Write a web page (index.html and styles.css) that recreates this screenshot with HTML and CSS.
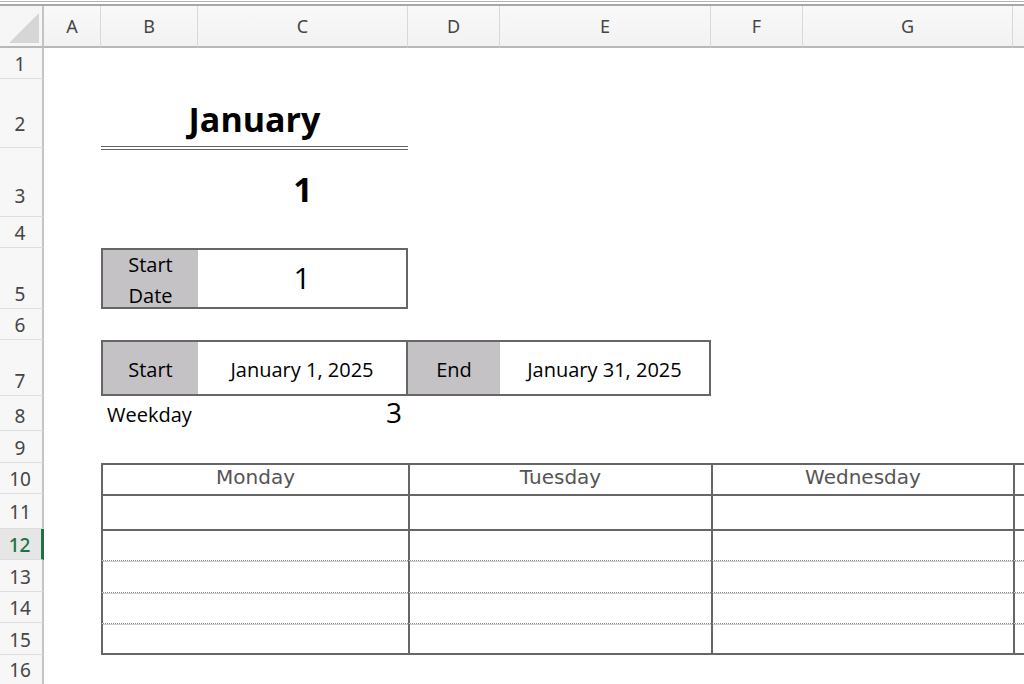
FILE: index.html
```html
<!DOCTYPE html>
<html lang="en">
<head>
<meta charset="utf-8">
<title>January</title>
<link rel="stylesheet" href="styles.css">
</head>
<body>
<div class="sheet">
  <div class="topbar"></div>

  <div class="corner"><span class="tri"></span></div>
  <div class="ch">A</div>
  <div class="ch">B</div>
  <div class="ch">C</div>
  <div class="ch">D</div>
  <div class="ch">E</div>
  <div class="ch">F</div>
  <div class="ch">G</div>
  <div class="ch last"></div>

  <div class="rh r1">1</div>
  <div class="rh r2">2</div>
  <div class="rh r3">3</div>
  <div class="rh r4">4</div>
  <div class="rh r5">5</div>
  <div class="rh r6">6</div>
  <div class="rh r7">7</div>
  <div class="rh r8">8</div>
  <div class="rh r9">9</div>
  <div class="rh r10">10</div>
  <div class="rh r11">11</div>
  <div class="rh r12 sel">12</div>
  <div class="rh r13">13</div>
  <div class="rh r14">14</div>
  <div class="rh r15">15</div>
  <div class="rh r16">16</div>

  <div class="title">January</div>
  <div class="monthnum">1</div>

  <div class="lbl sd-lbl">Start<br>Date</div>
  <div class="sd-val">1</div>

  <div class="lbl rng-start">Start</div>
  <div class="rng-sval">January 1, 2025</div>
  <div class="lbl rng-end">End</div>
  <div class="rng-eval">January 31, 2025</div>

  <div class="weekday">Weekday</div>
  <div class="weeknum">3</div>

  <div class="tc c1 row10 th">Monday</div>
  <div class="tc c2 row10 th">Tuesday</div>
  <div class="tc c3 row10 th">Wednesday</div>
  <div class="tc c4 row10 th"></div>

  <div class="tc c1 row11 solid"></div>
  <div class="tc c2 row11 solid"></div>
  <div class="tc c3 row11 solid"></div>
  <div class="tc c4 row11 solid"></div>

  <div class="tc c1 row12 solid"></div>
  <div class="tc c2 row12 solid"></div>
  <div class="tc c3 row12 solid"></div>
  <div class="tc c4 row12 solid"></div>

  <div class="tc c1 row13 dot"></div>
  <div class="tc c2 row13 dot"></div>
  <div class="tc c3 row13 dot"></div>
  <div class="tc c4 row13 dot"></div>

  <div class="tc c1 row14 dot"></div>
  <div class="tc c2 row14 dot"></div>
  <div class="tc c3 row14 dot"></div>
  <div class="tc c4 row14 dot"></div>

  <div class="tc c1 row15 dot bottom"></div>
  <div class="tc c2 row15 dot bottom"></div>
  <div class="tc c3 row15 dot bottom"></div>
  <div class="tc c4 row15 dot bottom"></div>
</div>
</body>
</html>
```

FILE: styles.css
```css
* { box-sizing: border-box; }
html, body {
  margin: 0;
  padding: 0;
  background: #ffffff;
  overflow: hidden;
}
.sheet {
  width: 1024px;
  height: 684px;
  display: grid;
  grid-template-columns: 44px 57px 97px 210px 92px 211px 92px 210px 11px;
  grid-template-rows: 6px 42px 31px 69px 69px 31px 61px 31px 56px 35px 32px 31px 35px 31px 32px 31px 32px 40px;
  font-family: "Open Sans", "Noto Sans", sans-serif;
  color: #000;
  overflow: hidden;
}
.topbar {
  grid-column: 1 / -1;
  grid-row: 1;
  background: linear-gradient(to bottom, #ffffff 0, #ffffff 1px, #b4b4b4 1px, #b4b4b4 2px, #ffffff 2px, #ffffff 4px, #a8a8a8 4px, #a8a8a8 6px);
}
.corner {
  grid-column: 1;
  grid-row: 2;
  background: #f6f6f6;
  border-right: 2px solid #c4c4c4;
  border-bottom: 2px solid #b8b8b8;
  display: flex;
  align-items: flex-end;
  justify-content: flex-end;
  padding: 0 3px 3px 0;
}
.tri {
  display: block;
  width: 30px;
  height: 30px;
  background: #d6d6d6;
  clip-path: polygon(100% 0, 100% 100%, 0 100%);
}
.ch {
  grid-row: 2;
  background: linear-gradient(to bottom, #f9f9f9, #f2f2f2);
  border-right: 1px solid #d8d8d8;
  border-bottom: 2px solid #b8b8b8;
  display: flex;
  align-items: center;
  justify-content: center;
  font-family: "Noto Sans", "Liberation Sans", sans-serif;
  font-size: 18px;
  color: #454545;
  padding-bottom: 1px;
}
.ch.last { border-right: none; }

.rh {
  grid-column: 1;
  background: #f7f7f7;
  border-right: 2px solid #c4c4c4;
  border-bottom: 1px solid #dedede;
  display: flex;
  align-items: flex-end;
  justify-content: center;
  font-family: "Noto Sans", "Liberation Sans", sans-serif;
  font-size: 19px;
  color: #454545;
  line-height: 22px;
  padding: 0 2px 3px 0;
}
.rh.sel {
  background: #e6e6e6;
  border-right: 3px solid #1e7145;
  color: #1e7145;
  font-weight: 500;
}
.r1 { grid-row: 3; }
.r2 { grid-row: 4; padding-bottom: 12px; }
.r3 { grid-row: 5; padding-bottom: 9px; }
.r4 { grid-row: 6; }
.r5 { grid-row: 7; }
.r6 { grid-row: 8; }
.r7 { grid-row: 9; }
.r8 { grid-row: 10; }
.r9 { grid-row: 11; }
.r10 { grid-row: 12; }
.r11 { grid-row: 13; padding-bottom: 5px; }
.r12 { grid-row: 14; }
.r13 { grid-row: 15; }
.r14 { grid-row: 16; }
.r15 { grid-row: 17; }
.r16 { grid-row: 18; align-items: flex-start; padding: 4px 2px 0 0; border-bottom: none; }

.title {
  grid-column: 3 / 5;
  grid-row: 4;
  border-bottom: 4px double #626262;
  margin-bottom: -2px;
  display: flex;
  align-items: flex-end;
  justify-content: center;
  font-weight: 700;
  font-size: 34px;
  line-height: 40px;
  padding-bottom: 7px;
}
.monthnum {
  grid-column: 4;
  grid-row: 5;
  display: flex;
  align-items: flex-end;
  justify-content: center;
  font-weight: 700;
  font-size: 34px;
  line-height: 40px;
  padding-bottom: 8px;
}

.lbl {
  background: #c4c2c4;
  display: flex;
  align-items: center;
  justify-content: center;
  text-align: center;
  font-size: 20px;
}
.sd-lbl {
  grid-column: 3;
  grid-row: 7;
  border: 2px solid #666;
  border-right: none;
  line-height: 31px;
  padding-top: 2px;
}
.sd-val {
  grid-column: 4;
  grid-row: 7;
  border: 2px solid #666;
  border-left: none;
  display: flex;
  align-items: center;
  justify-content: center;
  font-size: 30px;
  padding-bottom: 2px;
}

.rng-start, .rng-sval, .rng-end, .rng-eval {
  grid-row: 9;
  border-top: 2px solid #666;
  border-bottom: 2px solid #666;
  font-size: 20px;
  padding-top: 3px;
}
.rng-start { grid-column: 3; border-left: 2px solid #666; }
.rng-sval {
  grid-column: 4;
  border-right: 2px solid #666;
  display: flex;
  align-items: center;
  justify-content: center;
}
.rng-end { grid-column: 5; }
.rng-eval {
  grid-column: 6;
  border-right: 2px solid #666;
  display: flex;
  align-items: center;
  justify-content: center;
}

.weekday {
  grid-column: 3;
  grid-row: 10;
  font-size: 20px;
  display: flex;
  align-items: center;
  padding: 2px 0 0 6px;
}
.weeknum {
  grid-column: 4;
  grid-row: 10;
  font-size: 28px;
  display: flex;
  align-items: center;
  justify-content: flex-end;
  padding: 0 6px 4px 0;
}

.tc {
  border-left: 2px solid #666;
}
.c1 { grid-column: 3 / 5; }
.c2 { grid-column: 5 / 7; }
.c3 { grid-column: 7 / 9; }
.c4 { grid-column: 9; }
.row10 { grid-row: 12; }
.row11 { grid-row: 13; }
.row12 { grid-row: 14; }
.row13 { grid-row: 15; }
.row14 { grid-row: 16; }
.row15 { grid-row: 17; }
.th {
  border-top: 2px solid #666;
  display: flex;
  align-items: center;
  justify-content: center;
  font-family: "DejaVu Sans", Verdana, sans-serif;
  font-size: 20px;
  color: #555;
  padding-bottom: 6px;
}
.solid { border-top: 2px solid #666; }
.dot {
  border-top: 1px dotted #8a8a8a;
  box-shadow: inset 0 1px 0 #cdcdcd;
}
.bottom { border-bottom: 2px solid #666; }
```
